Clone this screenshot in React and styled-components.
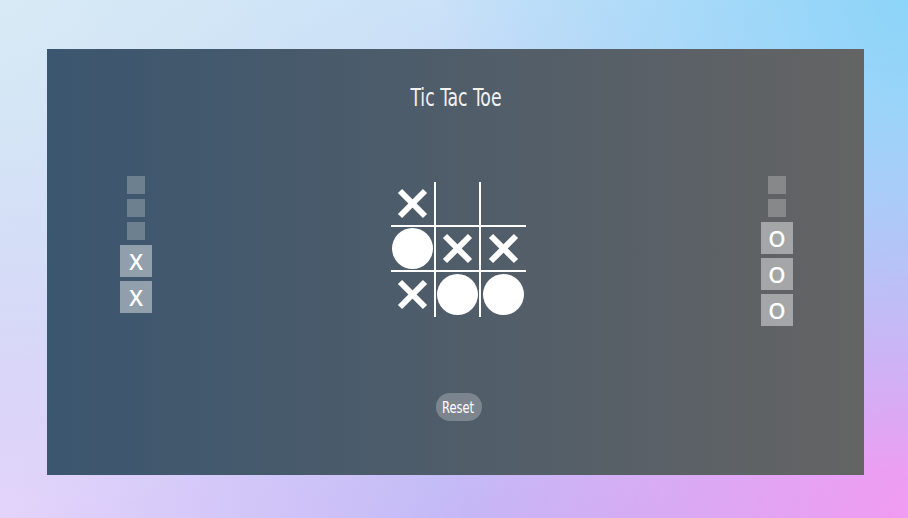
import React from "react";
import styled, { createGlobalStyle } from "styled-components";

const GlobalStyle = createGlobalStyle`
  html, body {
    margin: 0;
    padding: 0;
  }
  body {
    font-family: "DejaVu Sans Condensed", "DejaVu Sans", sans-serif;
  }
`;

const board = ["x", "", "", "o", "x", "x", "x", "o", "o"];
const playerX = { spare: 3, used: 2, mark: "X" };
const playerO = { spare: 2, used: 3, mark: "O" };

const Cross = () => (
  <svg width="31" height="31" viewBox="0 0 31 31">
    <line x1="3" y1="3" x2="28" y2="28" stroke="#fff" strokeWidth="6" />
    <line x1="28" y1="3" x2="3" y2="28" stroke="#fff" strokeWidth="6" />
  </svg>
);

const Pieces = ({ player }) => (
  <PieceColumn>
    {Array.from({ length: player.spare }).map((_, i) => (
      <SmallPiece key={"s" + i} />
    ))}
    {Array.from({ length: player.used }).map((_, i) => (
      <BigPiece key={"b" + i}>{player.mark}</BigPiece>
    ))}
  </PieceColumn>
);

const App = () => {
  return (
    <Page>
      <GlobalStyle />
      <Panel>
        <Title>
          <Narrow>Tic Tac Toe</Narrow>
        </Title>
        <GameRow>
          <Pieces player={playerX} />
          <Board>
            {board.map((v, i) => (
              <Cell key={i} col={i % 3} row={Math.floor(i / 3)}>
                {v === "x" && <Cross />}
                {v === "o" && <Circle />}
              </Cell>
            ))}
          </Board>
          <Pieces player={playerO} />
        </GameRow>
        <ResetButton>
          <Narrow>Reset</Narrow>
        </ResetButton>
      </Panel>
    </Page>
  );
};

export default App;

const Page = styled.div`
  width: 908px;
  height: 518px;
  box-sizing: border-box;
  padding: 49px 44px 43px 47px;
  background:
    radial-gradient(circle at 100% 0%, #8cd4f9 0%, rgba(140, 212, 249, 0) 45%),
    radial-gradient(circle at 100% 100%, #f09bf2 0%, rgba(240, 155, 242, 0) 45%),
    radial-gradient(circle at 0% 0%, #d8eaf5 0%, rgba(216, 234, 245, 0) 50%),
    radial-gradient(circle at 0% 100%, #e4d4fb 0%, rgba(228, 212, 251, 0) 45%),
    linear-gradient(#c8e0f8, #c2b8f6);
  overflow: hidden;
`;

const Panel = styled.div`
  height: 100%;
  display: flex;
  flex-direction: column;
  background: linear-gradient(to right, #3b566f, #646464);
  padding-top: 35px;
  box-sizing: border-box;
`;

const Narrow = styled.span`
  display: inline-block;
  transform: scaleX(0.8);
`;

const Title = styled.h1`
  margin: 0;
  text-align: center;
  color: #f2f2f2;
  font-size: 24px;
  line-height: 28px;
  font-weight: 400;
`;

const GameRow = styled.div`
  display: flex;
  justify-content: space-between;
  align-items: flex-start;
  padding: 0 71px 0 73px;
  margin-top: 64px;
`;

const PieceColumn = styled.div`
  width: 32px;
  display: flex;
  flex-direction: column;
  align-items: center;
  gap: 4px;
`;

const SmallPiece = styled.div`
  width: 18px;
  height: 18px;
  margin-bottom: 1px;
  background: rgba(255, 255, 255, 0.24);
`;

const BigPiece = styled.div`
  width: 32px;
  height: 32px;
  display: flex;
  align-items: center;
  justify-content: center;
  background: rgba(255, 255, 255, 0.43);
  color: #fff;
  font-family: "Open Sans", sans-serif;
  font-weight: 600;
  font-size: 22px;
`;

const Board = styled.div`
  margin-top: 6px;
  margin-left: 3px;
  display: grid;
  grid-template-columns: repeat(3, 45px);
  grid-template-rows: repeat(3, 45px);
`;

const Cell = styled.div`
  box-sizing: border-box;
  display: flex;
  align-items: center;
  justify-content: center;
  border-right: ${(p) => (p.col < 2 ? "2px solid #fff" : "none")};
  border-bottom: ${(p) => (p.row < 2 ? "2px solid #fff" : "none")};
`;

const Circle = styled.div`
  width: 41px;
  height: 41px;
  border-radius: 50%;
  background: #fff;
`;

const ResetButton = styled.button`
  align-self: center;
  margin-top: 67px;
  margin-left: 6px;
  width: 46px;
  height: 28px;
  padding: 0;
  border: none;
  border-radius: 14px;
  background: rgba(255, 255, 255, 0.25);
  color: #fff;
  font-family: inherit;
  font-size: 16px;
`;
